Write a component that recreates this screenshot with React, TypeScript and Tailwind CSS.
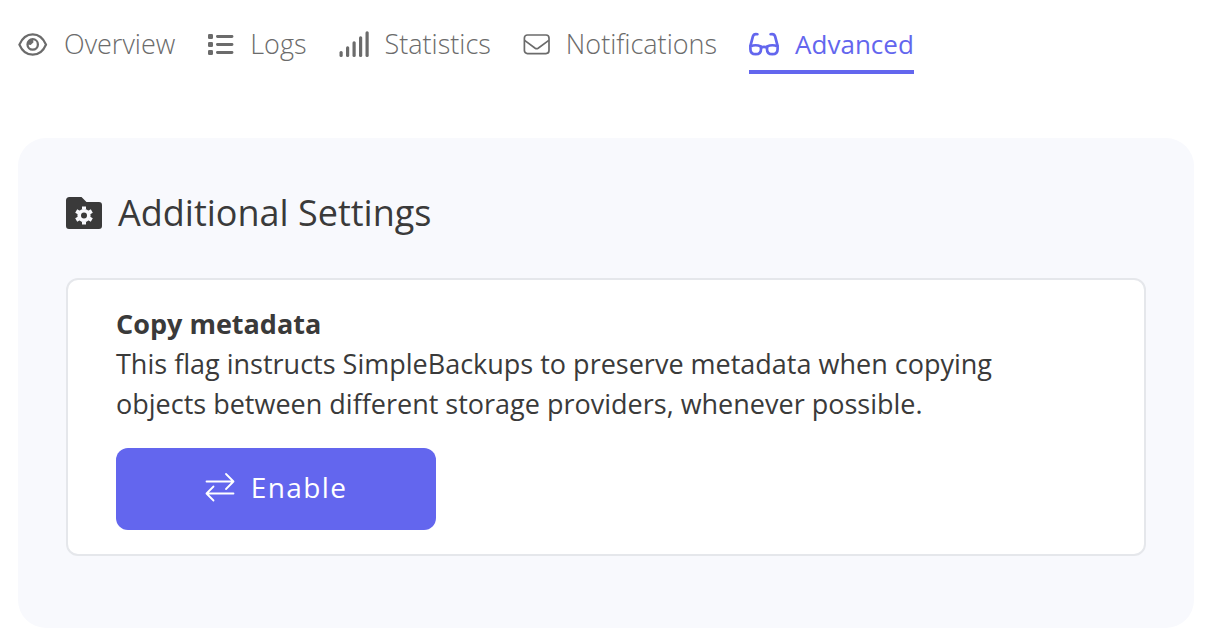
import type { ReactNode } from 'react';
import { clsx } from 'clsx';

type Tab = {
  label: string;
  icon: ReactNode;
  active?: boolean;
};

function EyeIcon() {
  return (
    <svg width="30" height="28" viewBox="0 0 30 28" fill="none" stroke="currentColor" strokeWidth="2.3">
      <path d="M1.4 14.6C4 8.4 9 4.3 14.7 4.3S25.4 8.4 28 14.6C25.4 20.8 20.4 24.7 14.7 24.7S4 20.8 1.4 14.6z" strokeLinejoin="round" />
      <circle cx="14.7" cy="14.4" r="5.2" />
      <path d="M9.5 14.4l.4-2.6 2.4-2.4 2.6-.3.6 3.1-2.8 2.7z" fill="currentColor" stroke="none" />
    </svg>
  );
}

function ListIcon() {
  return (
    <svg width="27" height="28" viewBox="0 0 27 28" fill="currentColor">
      {[4, 12, 20].map((y) => (
        <g key={y}>
          <rect x="1" y={y} width="5" height="5" rx="1.3" />
          <rect x="9" y={y + 1} width="17.4" height="3" rx="1.4" />
        </g>
      ))}
    </svg>
  );
}

function BarsIcon() {
  return (
    <svg width="30" height="28" viewBox="0 0 30 28" fill="currentColor">
      <rect x="0.5" y="21" width="3.2" height="6" rx="1.5" />
      <rect x="7" y="16.3" width="3.2" height="10.7" rx="1.5" />
      <rect x="13.5" y="11.3" width="3.2" height="15.7" rx="1.5" />
      <rect x="20" y="6.3" width="3.2" height="20.7" rx="1.5" />
      <rect x="26.5" y="1.3" width="3.2" height="25.7" rx="1.5" />
    </svg>
  );
}

function EnvelopeIcon() {
  return (
    <svg width="27" height="28" viewBox="0 0 27 28" fill="none" stroke="currentColor" strokeWidth="1.7" strokeLinejoin="round">
      <rect x="1.4" y="5" width="24.6" height="18.6" rx="3" />
      <path d="M1.6 10.4l10.6 7.8c.9.6 2 .6 2.9 0l10.7-7.8" />
    </svg>
  );
}

function GlassesIcon() {
  return (
    <svg width="30" height="28" viewBox="0 0 30 28" fill="none" stroke="currentColor" strokeWidth="2.7" strokeLinecap="round" strokeLinejoin="round">
      <path d="M8.4 4.2C5.5 3.6 4.4 4.6 3.9 6.4L1.4 15.8M21.6 4.2c2.9-.6 4 .4 4.5 2.2l2.5 9.4" />
      <path d="M1.4 16.4c3.3-1.5 7-1.5 10.6 0v2.8c0 3-2 5-5.3 5s-5.3-2-5.3-5zM18 16.4c3.600-1.5 7.300-1.5 10.600 0v2.800c0 3-2 5-5.300 5s-5.300-2-5.300-5z" />
      <path d="M12 17.4c2-.8 4-.8 6 0" />
    </svg>
  );
}

function FolderGearIcon() {
  return (
    <svg width="36" height="32" viewBox="0 0 36 32">
      <path d="M3.5 0h12l5 5h12.500a3 3 0 0 1 3 3v21a3 3 0 0 1-3 3H3a3 3 0 0 1-3-3V3.500A3.500 3.500 0 0 1 3.500 0z" fill="currentColor" />
      <g transform="translate(18 18.500)" stroke="#f8f9fd" fill="none">
        <circle r="4.8" strokeWidth="3.6" />
        <path d="M0-6v-3M0 6v3M5.200-3l2.600-1.500M5.200 3l2.600 1.500M-5.200-3l-2.600-1.500M-5.200 3l-2.600 1.500" strokeWidth="4" />
      </g>
    </svg>
  );
}

function SwapIcon() {
  return (
    <svg width="30" height="30" viewBox="0 0 30 30" fill="none" stroke="currentColor" strokeWidth="1.8" strokeLinecap="round" strokeLinejoin="round">
      <path d="M1.500 9.500h27M21 2l7.500 7.500L21 17M28.500 21.500h-27M8.500 14.500l-7 7 7 7" />
    </svg>
  );
}

const TABS: Tab[] = [
  { label: 'Overview', icon: <EyeIcon /> },
  { label: 'Logs', icon: <ListIcon /> },
  { label: 'Statistics', icon: <BarsIcon /> },
  { label: 'Notifications', icon: <EnvelopeIcon /> },
  { label: 'Advanced', icon: <GlassesIcon />, active: true },
];

export default function App() {
  return (
    <div className="min-h-screen bg-white pt-[26px] pr-4 pb-4 pl-[18px] font-['Open_Sans',sans-serif] text-[#3a3a3a]">
      <nav className="flex gap-8">
        {TABS.map((tab) => (
          <a
            key={tab.label}
            href="#"
            aria-current={tab.active ? 'page' : undefined}
            className={clsx(
              'flex items-center gap-4 border-b-4 pb-2 leading-9',
              tab.active
                ? 'border-[#6366ee] text-[26px] font-normal text-[#6366ee]'
                : 'border-transparent text-[27px] font-light text-[#6b6b6b]',
            )}
          >
            {tab.icon}
            {tab.label}
          </a>
        ))}
      </nav>

      <main className="mt-16 rounded-[28px] bg-[#f8f9fd] px-12 pt-12 pb-[72px]">
        <h1 className="flex items-center gap-4 text-[36px] leading-[54px]">
          <FolderGearIcon />
          Additional Settings
        </h1>

        <section className="mt-[38px] rounded-xl border-2 border-[#e5e7eb] bg-white px-12 py-6">
          <h2 className="text-[27px] leading-10 font-bold">Copy metadata</h2>
          <p className="max-w-[920px] text-[27px] leading-10 font-normal">
            This flag instructs SimpleBackups to preserve metadata when copying objects between different storage
            providers, whenever possible.
          </p>
          <button
            type="button"
            className="mt-6 flex h-[82px] w-80 items-center justify-center gap-4 rounded-xl bg-[#6366ee] pb-1 text-[28px] tracking-wider text-white"
          >
            <SwapIcon />
            Enable
          </button>
        </section>
      </main>
    </div>
  );
}
